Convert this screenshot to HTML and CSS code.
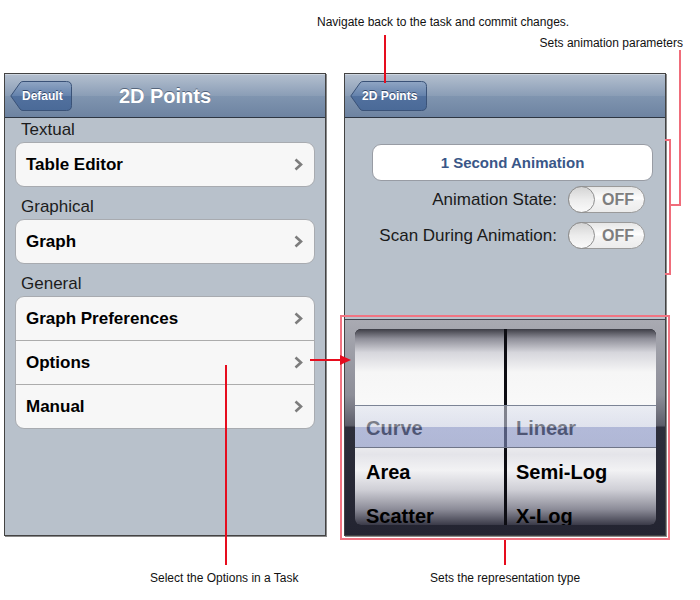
FILE: index.html
```html
<!DOCTYPE html>
<html lang="en">
<head>
    <meta charset="UTF-8">
    <title>2D Points - Options</title>
    <link rel="stylesheet" href="styles.css">
</head>
<body>
    <div class="stage">
        <!-- Task screen -->
        <div class="screen">
            <div class="navbar">
                <div class="back-btn back-default">
                    <svg class="back-shape" width="62" height="30" viewBox="0 0 62 30">
                        <defs>
                            <linearGradient id="bg1" x1="0" y1="0" x2="0" y2="1">
                                <stop offset="0" stop-color="#90a6c4"/>
                                <stop offset="0.5" stop-color="#6482ac"/>
                                <stop offset="0.5" stop-color="#52719e"/>
                                <stop offset="1" stop-color="#4a6a98"/>
                            </linearGradient>
                        </defs>
                        <path d="M0.8 15 L10 2 Q11 0.5 13 0.5 H56.5 Q61.5 0.5 61.5 5.5 V24.5 Q61.5 29.5 56.5 29.5 H13 Q11 29.5 10 28 Z" fill="url(#bg1)" stroke="#3a5277"/>
                    </svg>
                    <span>Default</span>
                </div>
                <h1 class="nav-title">2D Points</h1>
            </div>

            <div class="list">
                <div class="list-header">Textual</div>
                <div class="group">
                    <div class="row"><span>Table Editor</span><svg class="chevron" width="9" height="13" viewBox="0 0 9 13"><path d="M1.5 1.5 L7 6.5 L1.5 11.5"/></svg></div>
                </div>

                <div class="list-header">Graphical</div>
                <div class="group">
                    <div class="row"><span>Graph</span><svg class="chevron" width="9" height="13" viewBox="0 0 9 13"><path d="M1.5 1.5 L7 6.5 L1.5 11.5"/></svg></div>
                </div>

                <div class="list-header">General</div>
                <div class="group">
                    <div class="row"><span>Graph Preferences</span><svg class="chevron" width="9" height="13" viewBox="0 0 9 13"><path d="M1.5 1.5 L7 6.5 L1.5 11.5"/></svg></div>
                    <div class="row"><span>Options</span><svg class="chevron" width="9" height="13" viewBox="0 0 9 13"><path d="M1.5 1.5 L7 6.5 L1.5 11.5"/></svg></div>
                    <div class="row"><span>Manual</span><svg class="chevron" width="9" height="13" viewBox="0 0 9 13"><path d="M1.5 1.5 L7 6.5 L1.5 11.5"/></svg></div>
                </div>
            </div>
        </div>

        <!-- Options screen -->
        <div class="screen">
            <div class="navbar">
                <div class="back-btn back-points">
                    <svg class="back-shape" width="77" height="30" viewBox="0 0 77 30">
                        <defs>
                            <linearGradient id="bg2" x1="0" y1="0" x2="0" y2="1">
                                <stop offset="0" stop-color="#90a6c4"/>
                                <stop offset="0.5" stop-color="#6482ac"/>
                                <stop offset="0.5" stop-color="#52719e"/>
                                <stop offset="1" stop-color="#4a6a98"/>
                            </linearGradient>
                        </defs>
                        <path d="M0.8 15 L10 2 Q11 0.5 13 0.5 H71.5 Q76.5 0.5 76.5 5.5 V24.5 Q76.5 29.5 71.5 29.5 H13 Q11 29.5 10 28 Z" fill="url(#bg2)" stroke="#3a5277"/>
                    </svg>
                    <span>2D Points</span>
                </div>
            </div>

            <div class="options">
                <div class="anim-btn">1 Second Animation</div>
                <div class="opt-row">
                    <span class="opt-label">Animation State:</span>
                    <div class="switch"><div class="knob"></div><span>OFF</span></div>
                </div>
                <div class="opt-row">
                    <span class="opt-label">Scan During Animation:</span>
                    <div class="switch"><div class="knob"></div><span>OFF</span></div>
                </div>
            </div>

            <div class="picker">
                <div class="wheels">
                    <div class="wheel">
                        <div class="wheel-item">Curve</div>
                        <div class="wheel-item">Area</div>
                        <div class="wheel-item">Scatter</div>
                    </div>
                    <div class="wheel">
                        <div class="wheel-item">Linear</div>
                        <div class="wheel-item">Semi-Log</div>
                        <div class="wheel-item">X-Log</div>
                    </div>
                    <div class="selection"></div>
                </div>
            </div>
        </div>
    </div>

    <!-- Callouts -->
    <div class="note note-nav">Navigate back to the task and commit changes.</div>
    <div class="line red line-nav"></div>

    <div class="note note-params">Sets animation parameters</div>
    <div class="line pink line-params"></div>
    <div class="line pink line-params-h"></div>
    <div class="bracket"></div>

    <div class="picker-box"></div>
    <div class="line red line-picker"></div>
    <div class="note note-type">Sets the representation type</div>

    <div class="line red line-options"></div>
    <div class="line red line-arrow"></div>
    <div class="arrow-head"></div>
    <div class="note note-options">Select the Options in a Task</div>
</body>
</html>
```

FILE: styles.css
```css
body {
    margin: 0;
    width: 700px;
    height: 600px;
    position: relative;
    overflow: hidden;
    background-color: white;
    font-family: "Liberation Sans", Arial, sans-serif;
    color: #111;
}

.stage {
    display: flex;
    gap: 18px;
    padding: 73px 0 0 4px;
}

.screen {
    width: 322px;
    height: 463px;
    box-sizing: border-box;
    border: 1px solid #434343;
    box-shadow: 1px 1px 0 #8a8a8a;
    background-color: #b8c1cb;
    display: flex;
    flex-direction: column;
}

/* Navigation bar */
.navbar {
    height: 44px;
    box-sizing: border-box;
    border-top: 1px solid #cdd5df;
    border-bottom: 1px solid #2d3642;
    background: linear-gradient(#b2bece, #8a9db6 50%, #8095b0 50%, #6d83a1);
    display: grid;
    grid-template-columns: 1fr auto 1fr;
    align-items: center;
    padding: 0 5px;
}

.nav-title {
    margin: 0;
    font-size: 20px;
    font-weight: bold;
    color: white;
    text-shadow: 0 -1px 0 #55657c;
}

.back-btn {
    position: relative;
    height: 30px;
    display: flex;
    align-items: center;
    justify-self: start;
    font-size: 12px;
    font-weight: bold;
    color: white;
    text-shadow: 0 -1px 0 #34496b;
}

.back-default {
    width: 62px;
}

.back-points {
    width: 77px;
}

.back-shape {
    position: absolute;
    left: 0;
    top: 0;
}

.back-btn span {
    position: relative;
    padding-left: 12px;
}

/* Grouped list */
.list {
    padding: 0 10px;
}

.list-header {
    height: 24px;
    line-height: 24px;
    padding-left: 6px;
    font-size: 17px;
    color: #1c1c1c;
}

.group {
    background-color: #f7f7f7;
    border: 1px solid #a8abb0;
    border-radius: 9px;
    margin-bottom: 8px;
}

.row {
    height: 43px;
    display: flex;
    align-items: center;
    justify-content: space-between;
    padding: 0 11px 0 10px;
    font-size: 17px;
    font-weight: bold;
    color: #000;
}

.row + .row {
    border-top: 1px solid #acacac;
}

.chevron path {
    fill: none;
    stroke: #7d7d7d;
    stroke-width: 2.6;
}

/* Options */
.options {
    flex: 1;
    display: flex;
    flex-direction: column;
    align-items: flex-end;
    padding: 26px 20px 0 0;
}

.anim-btn {
    align-self: stretch;
    margin: 0 -8px 5px 27px;
    height: 37px;
    box-sizing: border-box;
    background-color: white;
    border: 1px solid #989ca4;
    border-radius: 9px;
    display: flex;
    align-items: center;
    justify-content: center;
    font-size: 15px;
    font-weight: bold;
    color: #3a5788;
}

.opt-row {
    display: flex;
    align-items: center;
    gap: 11px;
    margin-bottom: 9px;
}

.opt-label {
    font-size: 17px;
    color: #1a1a1a;
}

.switch {
    position: relative;
    width: 77px;
    height: 27px;
    box-sizing: border-box;
    border: 1px solid #9a9a9a;
    border-radius: 14px;
    background: linear-gradient(#e6e6e6, #fdfdfd 45%, #f4f4f4 55%, #ececec);
    display: flex;
    align-items: center;
    justify-content: flex-end;
    padding-right: 10px;
    font-size: 16px;
    font-weight: bold;
    color: #7e7e7e;
}

.knob {
    position: absolute;
    left: -1px;
    top: -1px;
    width: 27px;
    height: 27px;
    box-sizing: border-box;
    border-radius: 50%;
    border: 1px solid #8e8e8e;
    background: linear-gradient(#d4d4d4, #ececec 50%, #fafafa);
}

/* Picker */
.picker {
    height: 216px;
    box-sizing: border-box;
    border-top: 1px solid #434550;
    padding: 9px 9px 10px 10px;
    background: linear-gradient(#a9aab2 0%, #8d8e98 35%, #5e5f6b 49%, #2d2e3b 50%, #232431 100%);
}

.wheels {
    position: relative;
    height: 196px;
    display: flex;
    gap: 3px;
    background-color: #0d0d13;
    border-radius: 6px;
    overflow: hidden;
}

.wheel {
    flex: 1;
    padding-top: 77px;
    background: linear-gradient(#3d3d46 0%, #8f8f99 5%, #d6d6dc 12%, #f6f6f6 22%, #fbfbfb 52%, #e4e4e9 64%, #f2f2f4 72%, #cfcfd6 82%, #8c8c98 92%, #3a3a48 100%);
}

.wheel + .wheel .wheel-item {
    padding-left: 9px;
}

.wheel-item {
    height: 44px;
    line-height: 44px;
    padding-left: 11px;
    font-size: 20px;
    font-weight: bold;
    color: #000;
}

.selection {
    position: absolute;
    left: 0;
    right: 0;
    top: 76px;
    height: 43px;
    box-sizing: border-box;
    border-top: 1px solid #7c8496;
    border-bottom: 1px solid #6f7588;
    background: linear-gradient(rgba(222, 226, 238, 0.55), rgba(205, 210, 228, 0.6) 50%, rgba(128, 140, 192, 0.6) 50%, rgba(136, 148, 196, 0.6));
}

/* Callouts */
.note {
    position: absolute;
    font-size: 12px;
    line-height: 14px;
    color: #111;
    white-space: nowrap;
}

.line {
    position: absolute;
}

.red {
    background-color: #e60d1e;
}

.pink {
    background-color: #f06c7a;
}

.note-nav {
    left: 317px;
    top: 15px;
}

.line-nav {
    left: 384px;
    top: 35px;
    width: 2px;
    height: 48px;
}

.note-params {
    right: 17px;
    top: 36px;
}

.line-params {
    left: 679px;
    top: 50px;
    width: 2px;
    height: 156px;
}

.line-params-h {
    left: 669px;
    top: 204px;
    width: 12px;
    height: 2px;
}

.bracket {
    position: absolute;
    left: 665px;
    top: 139px;
    width: 4px;
    height: 132px;
    border: 2px solid #f06c7a;
    border-left: none;
}

.picker-box {
    position: absolute;
    left: 340px;
    top: 315px;
    width: 330px;
    height: 225px;
    box-sizing: border-box;
    border: 2px solid #f17482;
}

.line-picker {
    left: 504px;
    top: 540px;
    width: 2px;
    height: 25px;
}

.note-type {
    left: 430px;
    top: 571px;
}

.line-options {
    left: 225px;
    top: 365px;
    width: 2px;
    height: 200px;
}

.note-options {
    left: 150px;
    top: 571px;
}

.line-arrow {
    left: 310px;
    top: 359px;
    width: 32px;
    height: 2px;
}

.arrow-head {
    position: absolute;
    left: 340px;
    top: 355px;
    width: 0;
    height: 0;
    border-left: 11px solid #e60d1e;
    border-top: 5px solid transparent;
    border-bottom: 5px solid transparent;
}
```
